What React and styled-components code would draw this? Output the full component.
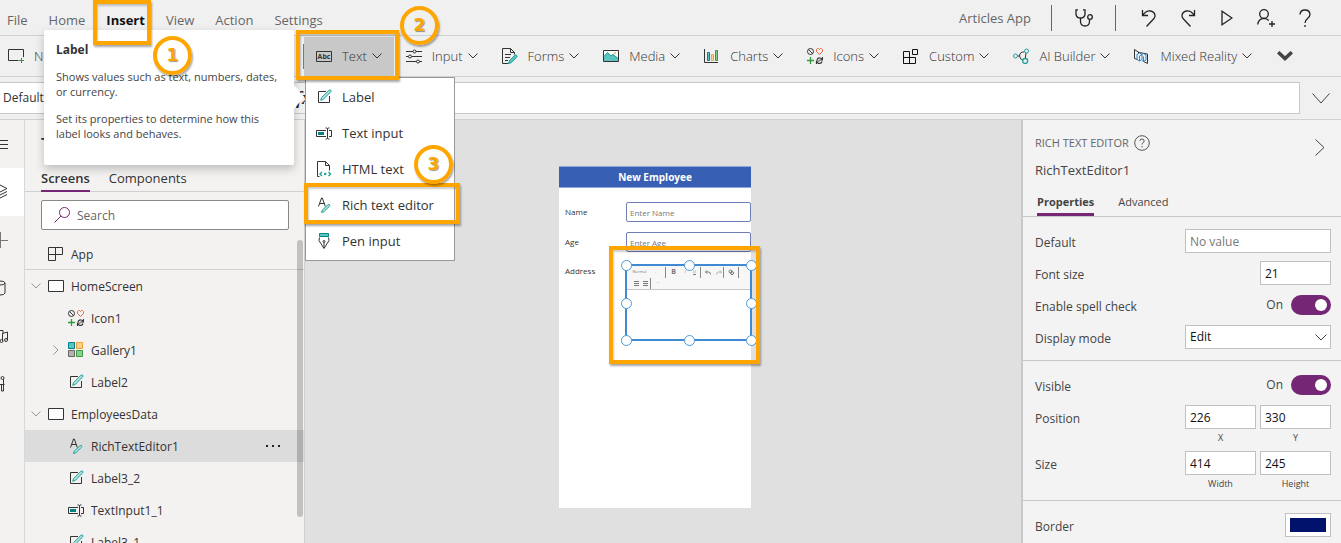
import React, { useState } from 'react';
import styled, { createGlobalStyle } from 'styled-components';

// STYLES
const GlobalStyle = createGlobalStyle`
    * {
        box-sizing: border-box;
    }
    body {
        margin: 0;
        font-family: 'Open Sans', 'Noto Sans', sans-serif;
        font-size: 12px;
        line-height: 16px;
        color: #333;
    }
    button, input, select {
        font: inherit;
        color: inherit;
        margin: 0;
        padding: 0;
    }
    button {
        border: none;
        background: none;
    }
    svg {
        display: block;
        flex: none;
    }
`
const Shell = styled.div`
    position: relative;
    height: 100vh;
    display: flex;
    flex-direction: column;
    overflow: hidden;
    background: #f0f0f0;
`
const TopBar = styled.header`
    display: flex;
    justify-content: space-between;
    align-items: center;
    height: 36px;
    flex: none;
    padding: 0 17px 0 7px;
    border-bottom: 1px solid #d0d0d0;
`
const MenuTabs = styled.nav`
    display: flex;
    gap: 21px;
    padding-top: 4px;
`
const MenuTab = styled.button`
    font-size: 13px;
    font-weight: ${props => props.$active ? 700 : 400};
    color: ${props => props.$active ? '#111' : '#666'};
`
const AppTools = styled.div`
    display: flex;
    align-items: center;
`
const AppName = styled.span`
    font-size: 13px;
    color: #666;
    padding-right: 20px;
`
const ToolDivider = styled.span`
    width: 1px;
    height: 26px;
    background: #666;
`
const ToolButton = styled.button`
    display: flex;
    justify-content: center;
    align-items: center;
    width: ${props => props.$wide ? 63 : 39}px;
    height: 32px;
    color: #222;
`
const ToolGroup = styled.div`
    display: flex;
    padding-left: 13px;
`
const Ribbon = styled.div`
    display: flex;
    align-items: center;
    height: 41px;
    flex: none;
    border-bottom: 1px solid #d0d0d0;
`
const NewGroup = styled.div`
    width: 304px;
    flex: none;
    height: 25px;
    border-right: 1px solid #777;
    display: flex;
    align-items: center;
`
const RibbonButton = styled.button`
    display: flex;
    align-items: center;
    height: 39px;
    padding: 0 12px 0 ${props => props.$first ? 8 : 12}px;
    font-size: 13px;
    font-weight: 300;
    color: #333;
    white-space: nowrap;
    background: ${props => props.$open ? '#c8c8c8' : 'transparent'};

    span {
        padding: 0 5px 0 10px;
    }
`
const MoreButton = styled.button`
    padding: 0 13px;
    color: #444;
`
const FormulaBar = styled.div`
    display: flex;
    align-items: center;
    height: 43px;
    flex: none;
    border-bottom: 1px solid #d0d0d0;
`
const PropertySelect = styled.select`
    appearance: none;
    width: 270px;
    height: 32px;
    padding: 0 3px;
    border: 1px solid #c8c8c8;
    border-left: none;
    border-radius: 0;
    background: #fff;
    font-size: 12px;
`
const FxLabel = styled.span`
    width: 40px;
    height: 32px;
    padding: 5px 0 0 26px;
    border: solid #c8c8c8;
    border-width: 1px 0;
    font: italic bold 18px 'Liberation Serif', serif;
    color: #222;
`
const FormulaInput = styled.input`
    flex: 1;
    min-width: 0;
    height: 32px;
    border: 1px solid #c8c8c8;
    background: #fff;
`
const ExpandButton = styled.button`
    display: flex;
    justify-content: center;
    width: 41px;
    color: #444;
`
const Workspace = styled.div`
    flex: 1;
    min-height: 0;
    display: flex;
`
const Rail = styled.nav`
    display: flex;
    flex-direction: column;
    align-items: flex-end;
    width: 25px;
    flex: none;
    overflow: hidden;
    background: #f3f2f1;
    border-right: 1px solid #d8d8d8;
`
const RailButton = styled.button`
    display: flex;
    align-items: center;
    justify-content: center;
    width: 48px;
    height: 48px;
    flex: none;
    color: #333;
    border-radius: 2px;
    background: ${props => props.$active ? '#fff' : 'transparent'};
`
const TreePanel = styled.aside`
    position: relative;
    width: 280px;
    flex: none;
    overflow: hidden;
    background: #f3f2f1;
    border-right: 1px solid #d0d0d0;
`
const TreeTitle = styled.h2`
    margin: 0;
    padding: 12px 16px 8px;
    font-size: 16px;
    line-height: 24px;
    font-weight: 600;
`
const TreeTabs = styled.div`
    display: flex;
    gap: 19px;
    height: 28px;
    padding: 0 16px;
    border-bottom: 1px solid #d0d0d0;
`
const TreeTab = styled.button`
    height: 28px;
    padding-top: 1px;
    font-size: 13px;
    font-weight: ${props => props.$active ? 600 : 400};
    border-bottom: 2px solid ${props => props.$active ? '#742774' : 'transparent'};
`
const SearchBox = styled.label`
    display: flex;
    align-items: center;
    gap: 7px;
    height: 30px;
    margin: 8px 15px 8px 16px;
    padding-left: 12px;
    border: 1px solid #888;
    border-radius: 2px;
    background: #fff;
    color: #742774;

    input {
        flex: 1;
        min-width: 0;
        padding-top: 2px;
        border: none;
        outline: none;
        background: none;
        color: #333;
    }
    input::placeholder {
        color: #666;
    }
`
const TreeList = styled.ul`
    margin: 0;
    padding: 0;
    list-style: none;
`
const TreeRow = styled.li`
    display: flex;
    align-items: center;
    height: 32px;
    padding-left: ${props => props.$depth ? 23 : 3}px;
    padding-right: 23px;
    background: ${props => props.$selected ? '#dcdcdc' : 'transparent'};
    border-bottom: ${props => props.$ruled ? '1px solid #d0d0d0' : 'none'};

    > span {
        flex: 1;
        padding: 2px 0 0 7px;
    }
`
const Twisty = styled.button`
    display: flex;
    justify-content: center;
    width: 16px;
    margin-right: 4px;
    color: #999;
`
const ScrollThumb = styled.div`
    position: absolute;
    top: 120px;
    right: 1px;
    width: 6px;
    height: 277px;
    border-radius: 3px;
    background: rgba(0, 0, 0, 0.2);
`
const Canvas = styled.main`
    flex: 1;
    min-width: 0;
    display: flex;
    justify-content: center;
    align-items: flex-start;
    padding: 46px 16px 0 0;
    background: #e0e0e0;
`
const PhoneScreen = styled.section`
    width: 192px;
    min-height: 342px;
    flex: none;
    background: #fff;
    font-size: 8px;
    line-height: 12px;
`
const ScreenTitle = styled.h1`
    margin: 0 0 14px;
    border: solid #8ea7d6;
    border-width: 1px 0;
    background: #375fb3;
    color: #fff;
    font-size: 10px;
    line-height: 20px;
    text-align: center;
`
const FormRow = styled.div`
    display: flex;
    align-items: center;
    margin-bottom: 10px;

    label {
        width: 67px;
        padding-left: 6px;
        flex: none;
    }
    input {
        flex: 1;
        min-width: 0;
        height: 20px;
        padding: 0 3px;
        border: 1px solid #6f7db8;
        border-radius: 2px;
        background: #fff;
    }
    input::placeholder {
        color: #777;
    }
`
const EditorRow = styled.div`
    display: flex;
    padding-top: 3px;

    > span {
        width: 67px;
        padding-left: 6px;
        flex: none;
    }
`
const EditorFrame = styled.div`
    position: relative;
    flex: 1;
    height: 75px;
    outline: 2px solid #3f8ad2;
    outline-offset: -1px;
    background: #fff;
`
const EditorTools = styled.div`
    display: flex;
    flex-wrap: wrap;
    align-items: center;
    align-content: center;
    height: 25px;
    padding: 1px 6px 0;
    border-bottom: 1px solid #c8c8c8;
    background: #f7f7f7;
    color: #777;
    font-size: 4px;
    line-height: 8px;
`
const EditorTool = styled.span`
    width: ${props => props.$width}px;
    height: 11px;
    display: flex;
    align-items: center;
    justify-content: center;
    font-size: ${props => props.$strong ? 7 : 4}px;
    font-weight: ${props => props.$strong ? 700 : 400};
    border-right: ${props => props.$last ? '1px solid #888' : 'none'};
`
const Handle = styled.i`
    position: absolute;
    left: ${props => props.$left};
    top: ${props => props.$top};
    width: 11px;
    height: 11px;
    margin: -5px 0 0 -5px;
    border: 1px solid #4a9bd8;
    border-radius: 50%;
    background: #fff;
`
const PropsPanel = styled.aside`
    width: 320px;
    flex: none;
    border-left: 2px solid #c8c8c8;
    background: #f3f3f3;
    color: #444;
`
const PropsHeader = styled.div`
    display: flex;
    justify-content: space-between;
    padding: 15px 16px 0 12px;
`
const ControlType = styled.div`
    display: flex;
    align-items: center;
    gap: 5px;
    font-size: 11px;
    color: #666;
`
const ControlName = styled.div`
    padding-top: 10px;
    font-size: 13px;
    line-height: 18px;
`
const CollapseButton = styled.button`
    padding-top: 4px;
    color: #444;
    align-self: flex-start;
`
const PropsTabs = styled.div`
    display: flex;
    gap: 24px;
    margin-top: 10px;
    padding: 0 14px;
    border-bottom: 1px solid #c8c8c8;
`
const PropsTab = styled.button`
    height: 27px;
    padding-top: 1px;
    font-size: 11px;
    font-weight: ${props => props.$active ? 700 : 400};
    border-bottom: 3px solid ${props => props.$active ? '#742774' : 'transparent'};
`
const Section = styled.div`
    display: flex;
    flex-direction: column;
    gap: 8px;
    padding: 12px 10px 11px 12px;
    border-bottom: 1px solid #c8c8c8;
`
const Field = styled.div`
    display: flex;
    justify-content: space-between;
    align-items: flex-start;

    > label, > span {
        padding-top: 6px;
    }
`
const TextBox = styled.input`
    width: ${props => props.$short ? 71 : 146}px;
    height: 24px;
    padding: 0 4px;
    border: 1px solid #c0c0c0;
    background: #fff;
    color: #111;

    &::placeholder {
        color: #777;
        opacity: 1;
    }
`
const SelectWrap = styled.div`
    display: grid;
    width: 146px;
    align-items: center;
    justify-items: end;

    > * {
        grid-area: 1 / 1;
    }
    svg {
        margin-right: 4px;
        pointer-events: none;
        z-index: 1;
    }
`
const ModeSelect = styled.select`
    appearance: none;
    width: 100%;
    height: 24px;
    padding: 0 4px;
    border: 1px solid #c0c0c0;
    border-radius: 0;
    background: #fff;
    color: #111;
`
const Pair = styled.div`
    display: flex;
    gap: 4px;

    label {
        display: flex;
        flex-direction: column;
        align-items: center;
        font-size: 9px;
        line-height: 10px;
        gap: 4px;
    }
    input {
        font-size: 12px;
    }
`
const ToggleLabel = styled.label`
    && {
        display: flex;
        align-items: center;
        gap: 8px;
        padding: 2px 0;
    }
`
const Toggle = styled.input`
    appearance: none;
    width: 40px;
    height: 20px;
    border-radius: 10px;
    background: #742774;

    &::before {
        content: '';
        display: block;
        width: 12px;
        height: 12px;
        margin: 4px 0 0 24px;
        border-radius: 50%;
        background: #fff;
    }
    &:not(:checked)::before {
        margin-left: 4px;
    }
`
const Swatch = styled.button`
    width: 46px;
    height: 24px;
    padding: 4px;
    border: 1px solid #c0c0c0;
    background: #fff;

    i {
        display: block;
        height: 14px;
        background: #00126b;
    }
`
const Dropdown = styled.div`
    position: absolute;
    left: 305px;
    top: 77px;
    width: 150px;
    padding: 1px 0;
    border: 1px solid #999;
    background: #fff;
`
const DropdownItem = styled.button`
    display: flex;
    align-items: center;
    gap: 10px;
    width: 100%;
    height: 36px;
    padding-left: 10px;
    font-size: 13px;
    white-space: nowrap;
`
const Tooltip = styled.div`
    position: absolute;
    left: 44px;
    top: 30px;
    width: 250px;
    height: 135px;
    padding: 12px 8px 0 12px;
    border-radius: 2px;
    background: #fff;
    box-shadow: 0 4px 10px rgba(0, 0, 0, 0.22);
    color: #444;
    font-size: 11px;
    line-height: 15px;

    &::after {
        content: '';
        position: absolute;
        left: 100%;
        top: 55px;
        border: solid transparent;
        border-width: 12px 0 12px 10px;
        border-left-color: #fff;
    }
    strong {
        font-size: 12px;
        color: #333;
    }
    p {
        margin: 12px 0 0;
    }
`
const Highlight = styled.div`
    position: absolute;
    left: ${props => props.$x}px;
    top: ${props => props.$y}px;
    width: ${props => props.$w}px;
    height: ${props => props.$h}px;
    border: 4px solid #ffa500;
    box-shadow: 1px 2px 2px rgba(0, 0, 0, 0.35), inset 1px 2px 2px rgba(0, 0, 0, 0.2);
    pointer-events: none;
`
const StepBadge = styled.div`
    position: absolute;
    left: ${props => props.$x}px;
    top: ${props => props.$y}px;
    width: 39px;
    height: 39px;
    border: 4px solid #ffa500;
    border-radius: 50%;
    box-shadow: 1px 2px 2px rgba(0, 0, 0, 0.35);
    color: #ffa500;
    font: bold 17px/31px 'DejaVu Sans', sans-serif;
    text-align: center;
    text-shadow: 1px 1px 1px rgba(0, 0, 0, 0.4);
    pointer-events: none;
`

// ICONS
const Svg = ({ w = 16, h = 16, children, ...rest }) => (
    <svg width={w} height={h} viewBox={`0 0 ${w} ${h}`} fill="none" stroke="currentColor" aria-hidden="true" {...rest}>
        {children}
    </svg>
)

const ChevronDown = ({ w = 10, h = 6, stroke = 1 }) => (
    <Svg w={w} h={h} strokeWidth={stroke}>
        <path d={`M.5 .5 L${w / 2} ${h - 1} L${w - 0.5} .5`} />
    </Svg>
)
const ChevronRight = ({ w = 6, h = 10 }) => (
    <Svg w={w} h={h}>
        <path d={`M.5 .5 L${w - 1} ${h / 2} L.5 ${h - 0.5}`} />
    </Svg>
)
const MoreIcon = () => (
    <Svg w={16} h={10} strokeWidth="3.500">
        <path d="M1.200 1.200L8 7.500l6.800-6.300" />
    </Svg>
)

const LabelIcon = () => (
    <Svg>
        <path d="M10 2.500H2.500v11h11V7" stroke="#333" />
        <path d="M4.700 11.300l.8-2.700 7.600-7.400q1-.7 1.600 0 .7.9 0 1.600L7.300 10.400z" fill="#b5e3e1" stroke="#209f9a" />
    </Svg>
)
const TextInputIcon = () => (
    <Svg>
        <path d="M10 5.500H.5v6H10M13 5.500h2.500v6H13" stroke="#333" />
        <path d="M9.500 3h1.500l.5.5.5-.5H13.500M9.500 14h1.500l.5-.5.5.5H13.500M11.500 3.500v10" stroke="#333" />
        <path d="M2 8.500h6" stroke="#038387" strokeWidth="3" />
    </Svg>
)
const HtmlIcon = () => (
    <Svg>
        <path d="M3.500 15.500h-2V.5h8l4 4v5M9.500 .5v4h4" stroke="#333" />
        <path d="M6 11l-2 2 2 2M12.500 11l2 2-2 2" stroke="#209f9a" strokeWidth="1.400" />
        <circle cx="9.200" cy="13" r="1.300" fill="#209f9a" stroke="none" />
    </Svg>
)
const RichTextIcon = () => (
    <Svg>
        <path d="M2.500 9.500L5.500 1h.8l3 8.500M3.500 6.500h5" stroke="#333" />
        <path d="M5.500 15.500l.8-2.400 5.700-5.400q1-.6 1.500 0 .6.7 0 1.500L7.900 14.700z" fill="#b5e3e1" stroke="#209f9a" />
    </Svg>
)
const PenIcon = () => (
    <Svg>
        <path d="M3.500 .5h9v3h-9z" fill="#5cc4c1" stroke="#038387" />
        <path d="M3.500 4.500L3 7.500l5 8 5-8-.5-3M8 15V9.500" stroke="#333" />
        <circle cx="8" cy="8.500" r="1" stroke="#333" />
    </Svg>
)
const NewScreenIcon = () => (
    <Svg>
        <path d="M10.500 12.500H.5v-11h15V9" stroke="#333" />
        <path d="M13.500 10v5M11 12.500h5" stroke="#2f9a3c" />
    </Svg>
)
const AbcIcon = () => (
    <Svg>
        <path d="M.5 3.500h15v10H.5z" stroke="#333" />
        <text x="8" y="11" fontSize="7" fontWeight="700" textAnchor="middle" fill="#333" stroke="none">Abc</text>
    </Svg>
)
const SlidersIcon = () => (
    <Svg stroke="#333">
        <path d="M0 3.500h7M10 3.500h6M0 8.500h2.500M5.500 8.500H16M0 13.500h10.500M13.500 13.500H16" />
        <circle cx="8.500" cy="3.500" r="1.500" />
        <circle cx="4" cy="8.500" r="1.500" />
        <circle cx="12" cy="13.500" r="1.500" />
    </Svg>
)
const FormsIcon = () => (
    <Svg>
        <path d="M6.500 15.500H.5V.5h8l4 4v2M8.500 .5v4h4M3 6.500h6M3 9.500h5M3 12.500h3" stroke="#333" />
        <path d="M6.500 15.500l1-3 5.500-5.300q1.400-.5 2 .5.300.8-.3 1.500L9.200 14.700z" fill="#5cc4c1" stroke="#209f9a" />
    </Svg>
)
const MediaIcon = () => (
    <Svg>
        <path d="M1 2.500h14v11H1z" fill="#fff" stroke="none" />
        <path d="M1 13V8l3.500-3.500L8 8l2-2 5 4v3z" fill="#5cc4c1" stroke="none" />
        <path d="M1 8.500l3.500-4L8 8l2-1.500 5 4" stroke="#209f9a" />
        <path d="M.5 2.500h15v11H.5z" stroke="#333" />
        <circle cx="12" cy="5" r="1" fill="#f4b04e" stroke="none" />
    </Svg>
)
const ChartsIcon = () => (
    <Svg>
        <path d="M.5 1v13.500H14" stroke="#333" />
        <path d="M3.500 4.500h2v8h-2z" stroke="#038387" fill="#5cc4c1" />
        <path d="M7.500 6.500h2v6h-2z" stroke="#f2a33a" fill="#fbd08c" />
        <path d="M11.500 2.500h2v10h-2z" stroke="#2f9a3c" fill="#8ccf8f" />
    </Svg>
)
const IconsIcon = () => (
    <Svg>
        <circle cx="3.500" cy="3.500" r="3" stroke="#333" />
        <path d="M1.500 1.500l4 4" stroke="#333" />
        <path d="M12.500 6.500L9.500 3.500V1.500l1-1h1l1 1 1-1h1l1 1v2z" stroke="#f0603c" />
        <path d="M3.500 9v7M0 12.500h7" stroke="#2f9a3c" strokeWidth="1.300" />
        <path d="M10 12q.5-2.500 3-2 1.500.2 2 1.500M15.500 9v3h-3M15 13.500q-.5 2-3 2-1.300-.3-2-1.500M9.500 16v-3h3" stroke="#333" strokeWidth="1.200" />
    </Svg>
)
const CustomIcon = () => (
    <Svg stroke="#111">
        <path d="M.5 3.500h6v12h-6zM.5 9.500h12v6h-12M9.500 1.500h5v5h-5z" />
    </Svg>
)
const AiIcon = () => (
    <Svg>
        <path d="M11.200 4Q7 3.500 6.500 8q.5 3.500 3.500 4.200M13 5l-.8 5.500M4.500 8h2" stroke="#333" />
        <circle cx="2.500" cy="8" r="2" stroke="#209f9a" />
        <circle cx="13.500" cy="3" r="2" stroke="#209f9a" />
        <circle cx="12.200" cy="13" r="2.500" stroke="#209f9a" strokeWidth="1.300" />
    </Svg>
)
const MixedIcon = () => (
    <Svg>
        <path d="M.5 10.500V1.500l4.500 3 8.500 1.500v9.500l-4-2M.5 10.500l3 1M4.500 4v2" stroke="#333" />
        <path d="M3 6.500L5.500 5 8 6.500v5L5.500 13 3 11.500zM5.500 8L8 6.500M5.500 8v5M7 7l2.500-1.500L12 7v5l-2.500 1.500L8 12.500M9.500 8.500v5" stroke="#2f86cc" />
    </Svg>
)
const AppIcon = () => (
    <Svg stroke="#333">
        <path d="M.5 1.500h14v7H.5zM.5 8.500v6h7v-13" />
    </Svg>
)
const ScreenIcon = () => (
    <Svg stroke="#333">
        <path d="M.5 2.500h15v11H.5z" fill="#fff" />
    </Svg>
)
const GalleryIcon = () => (
    <Svg>
        <path d="M.5 .5h6v6h-6z" fill="#5cc4c1" stroke="#038387" />
        <path d="M8.500 .5h6v6h-6z" fill="#fbd08c" stroke="#f2a33a" />
        <path d="M.5 8.500h6v6h-6z" fill="#b3b3b3" stroke="#666" />
        <path d="M8.500 8.500h6v6h-6z" fill="#8ccf8f" stroke="#3c9c43" />
    </Svg>
)
const SearchIcon = () => (
    <Svg>
        <circle cx="10.500" cy="5.500" r="5" />
        <path d="M7 9L.5 15.500" />
    </Svg>
)
const HelpIcon = () => (
    <Svg stroke="#555">
        <circle cx="8" cy="8" r="7.300" />
        <path d="M5.800 6q.2-2 2.200-2t2.200 2q0 1-1.200 1.800T8 9.500M8 11v1.300" />
    </Svg>
)

// top right tools
const CheckerIcon = () => (
    <Svg w={18} h={18} strokeWidth="1.300">
        <path d="M3 .8H1v4.500q.5 3.700 4.500 3.700T10 5.300V.8H8M5.500 9v4q.5 4 4.500 4t4.500-4v-2.500" />
        <circle cx="15" cy="8" r="2.300" />
    </Svg>
)
const UndoIcon = () => (
    <Svg w={16} h={18} strokeWidth="1.300">
        <path d="M1.500 1v5.500H7M1.500 6.500Q5 1.500 9.500 2q4.500 1 4.500 5 0 1.500-1.500 3L5.500 17.500" />
    </Svg>
)
const RedoIcon = () => (
    <Svg w={16} h={18} strokeWidth="1.300">
        <path d="M14.500 1v5.500H9M14.500 6.500Q11 1.500 6.500 2 2 3 2 7q0 1.500 1.500 3l7 7.500" />
    </Svg>
)
const PlayIcon = () => (
    <Svg w={12} h={16} strokeWidth="1.300">
        <path d="M1 1.300v13.400L11 8z" />
    </Svg>
)
const ShareIcon = () => (
    <Svg w={18} h={18} strokeWidth="1.300">
        <circle cx="7" cy="5" r="4.300" />
        <path d="M.7 15.500Q1.500 9.500 7 9.300q3 .2 4.700 2.200M15 12v6M12 15h6" />
    </Svg>
)
const QuestionIcon = () => (
    <Svg w={12} h={18} strokeWidth="1.300">
        <path d="M1 5.500Q1.300 1 6 1t5 4.500q0 2-2.500 4T6 14M6 16v2" />
    </Svg>
)

// left rail
const railIcons = [
    ['Menu', <Svg key="i"><path d="M0 4.500h16M0 8.500h16M0 12.500h16" /></Svg>],
    ['Tree view', <Svg key="i"><path d="M1 4.500L8 1l7 3.500L8 8zM1 7.500L8 11l7-3.500M1 10.500L8 14l7-3.500M1 5v6" /></Svg>],
    ['Insert', <Svg key="i"><path d="M0 8.500h16M8.500 0v16" stroke="#777" /></Svg>],
    ['Data', <Svg key="i"><path d="M3 3v10q.5 2 5 2t5-2V3" /><ellipse cx="8" cy="3" rx="5" ry="2" /></Svg>],
    ['Media', <Svg key="i"><path d="M10.500 13V5.500L15.500 4v8M1 2.500h10v3M1 13h5" /><circle cx="9.500" cy="13" r="1.500" /><circle cx="14" cy="12" r="1.500" /></Svg>],
    ['Advanced tools', <Svg key="i"><path d="M7.500 1v14M4 8.500h8.500M9.500 8.500v6.500h2V3" /><circle cx="10.500" cy="2" r="1.500" /></Svg>],
]

// rich text toolbar
const EditorUndo = () => <Svg w={6} h={5}><path d="M.5 2h3q2 0 2 2.500M2 .5L.5 2 2 3.500" /></Svg>
const EditorRedo = () => <Svg w={6} h={5} opacity=".5"><path d="M5.500 2h-3q-2 0-2 2.500M4 .5L5.500 2 4 3.500" /></Svg>
const EditorLink = () => <Svg w={6} h={6}><circle cx="2.500" cy="2.500" r="1.500" /><circle cx="4" cy="4" r="1.500" /></Svg>
const EditorBullets = () => <Svg w={5} h={5}><path d="M0 .5h5M0 2.500h5M0 4.500h5" /></Svg>

// DATA
const menuTabs = ['File', 'Home', 'Insert', 'View', 'Action', 'Settings']

const ribbonItems = [
    ['Text', AbcIcon],
    ['Input', SlidersIcon],
    ['Forms', FormsIcon],
    ['Media', MediaIcon],
    ['Charts', ChartsIcon],
    ['Icons', IconsIcon],
    ['Custom', CustomIcon],
    ['AI Builder', AiIcon],
    ['Mixed Reality', MixedIcon],
]

const textControls = [
    ['Label', LabelIcon],
    ['Text input', TextInputIcon],
    ['HTML text', HtmlIcon],
    ['Rich text editor', RichTextIcon],
    ['Pen input', PenIcon],
]

const treeItems = [
    { name: 'App', icon: AppIcon, depth: 0, ruled: true },
    { name: 'HomeScreen', icon: ScreenIcon, depth: 0, open: true },
    { name: 'Icon1', icon: IconsIcon, depth: 1 },
    { name: 'Gallery1', icon: GalleryIcon, depth: 1, closed: true },
    { name: 'Label2', icon: LabelIcon, depth: 1 },
    { name: 'EmployeesData', icon: ScreenIcon, depth: 0, open: true },
    { name: 'RichTextEditor1', icon: RichTextIcon, depth: 1 },
    { name: 'Label3_2', icon: LabelIcon, depth: 1 },
    { name: 'TextInput1_1', icon: TextInputIcon, depth: 1 },
    { name: 'Label3_1', icon: LabelIcon, depth: 1 },
]

const editorTools = [
    { id: 'style', width: 15, content: 'Normal' },
    { id: 'open', width: 19, last: true, content: '-' },
    { id: 'bold', width: 15, strong: true, content: 'B' },
    { id: 'italic', width: 8, content: <em>I</em> },
    { id: 'underline', width: 12, last: true, content: <u>U</u> },
    { id: 'undo', width: 14, content: <EditorUndo /> },
    { id: 'redo', width: 9, last: true, content: <EditorRedo /> },
    { id: 'link', width: 15, last: true, content: <EditorLink /> },
    { id: 'bullets', width: 8, content: <EditorBullets /> },
    { id: 'numbers', width: 11, last: true, content: <EditorBullets /> },
    { id: 'more', width: 14, content: '···' },
]

const handles = [
    ['0%', '0%'], ['50%', '0%'], ['100%', '0%'],
    ['0%', '50%'], ['100%', '50%'],
    ['0%', '100%'], ['50%', '100%'], ['100%', '100%'],
]

const ToggleField = ({ id, label }) => {
    const [on, setOn] = useState(true)
    return (
        <Field>
            <label htmlFor={id}>{label}</label>
            <ToggleLabel>
                {on ? 'On' : 'Off'}
                <Toggle id={id} type="checkbox" checked={on} onChange={() => setOn(!on)} />
            </ToggleLabel>
        </Field>
    )
}

const App = () => {
    const selected = 'RichTextEditor1'

    return (
        <Shell>
            <GlobalStyle />

            <TopBar>
                <MenuTabs>
                    {menuTabs.map(tab => (
                        <MenuTab key={tab} $active={tab === 'Insert'}>{tab}</MenuTab>
                    ))}
                </MenuTabs>
                <AppTools>
                    <AppName>Articles App</AppName>
                    <ToolDivider />
                    <ToolButton $wide aria-label="App checker"><CheckerIcon /></ToolButton>
                    <ToolDivider />
                    <ToolGroup>
                        <ToolButton aria-label="Undo"><UndoIcon /></ToolButton>
                        <ToolButton aria-label="Redo"><RedoIcon /></ToolButton>
                        <ToolButton aria-label="Preview"><PlayIcon /></ToolButton>
                        <ToolButton aria-label="Share"><ShareIcon /></ToolButton>
                        <ToolButton aria-label="Help"><QuestionIcon /></ToolButton>
                    </ToolGroup>
                </AppTools>
            </TopBar>

            <Ribbon>
                <NewGroup>
                    <RibbonButton $first>
                        <NewScreenIcon />
                        <span>New screen</span>
                    </RibbonButton>
                </NewGroup>
                {ribbonItems.map(([name, Icon]) => (
                    <RibbonButton key={name} $open={name === 'Text'}>
                        <Icon />
                        <span>{name}</span>
                        <ChevronDown />
                    </RibbonButton>
                ))}
                <MoreButton aria-label="More commands"><MoreIcon /></MoreButton>
            </Ribbon>

            <FormulaBar>
                <PropertySelect aria-label="Property" defaultValue="Default">
                    <option>Default</option>
                </PropertySelect>
                <FxLabel>fx</FxLabel>
                <FormulaInput aria-label="Formula" />
                <ExpandButton aria-label="Expand formula bar"><ChevronDown w={18} h={11} /></ExpandButton>
            </FormulaBar>

            <Workspace>
                <Rail>
                    {railIcons.map(([name, icon]) => (
                        <RailButton key={name} aria-label={name} $active={name === 'Tree view'}>{icon}</RailButton>
                    ))}
                </Rail>

                <TreePanel>
                    <TreeTitle>Tree view</TreeTitle>
                    <TreeTabs>
                        <TreeTab $active>Screens</TreeTab>
                        <TreeTab>Components</TreeTab>
                    </TreeTabs>
                    <SearchBox>
                        <SearchIcon />
                        <input type="text" placeholder="Search" aria-label="Search" />
                    </SearchBox>
                    <TreeList>
                        {treeItems.map(({ name, icon: Icon, depth, ruled, open, closed }) => (
                            <TreeRow key={name} $depth={depth} $ruled={ruled} $selected={name === selected}>
                                <Twisty aria-label={`Toggle ${name}`}>
                                    {open && <ChevronDown />}
                                    {closed && <ChevronRight />}
                                </Twisty>
                                <Icon />
                                <span>{name}</span>
                                {name === selected && (
                                    <Svg w={16} h={4} fill="#222" stroke="none">
                                        <path d="M1 1h2v2h-2zM7 1h2v2h-2zM13 1h2v2h-2z" />
                                    </Svg>
                                )}
                            </TreeRow>
                        ))}
                    </TreeList>
                    <ScrollThumb />
                </TreePanel>

                <Canvas>
                    <PhoneScreen>
                        <ScreenTitle>New Employee</ScreenTitle>
                        <FormRow>
                            <label htmlFor="emp-name">Name</label>
                            <input id="emp-name" placeholder="Enter Name" />
                        </FormRow>
                        <FormRow>
                            <label htmlFor="emp-age">Age</label>
                            <input id="emp-age" placeholder="Enter Age" />
                        </FormRow>
                        <EditorRow>
                            <span>Address</span>
                            <EditorFrame>
                                <EditorTools>
                                    {editorTools.map(({ id, width, last, strong, content }) => (
                                        <EditorTool key={id} $width={width} $last={last} $strong={strong}>{content}</EditorTool>
                                    ))}
                                </EditorTools>
                                {handles.map(([left, top]) => (
                                    <Handle key={left + top} $left={left} $top={top} />
                                ))}
                            </EditorFrame>
                        </EditorRow>
                    </PhoneScreen>
                </Canvas>

                <PropsPanel>
                    <PropsHeader>
                        <div>
                            <ControlType>RICH TEXT EDITOR <HelpIcon /></ControlType>
                            <ControlName>{selected}</ControlName>
                        </div>
                        <CollapseButton aria-label="Collapse panel"><ChevronRight w={10} h={17} /></CollapseButton>
                    </PropsHeader>
                    <PropsTabs>
                        <PropsTab $active>Properties</PropsTab>
                        <PropsTab>Advanced</PropsTab>
                    </PropsTabs>

                    <Section>
                        <Field>
                            <label htmlFor="default">Default</label>
                            <TextBox id="default" placeholder="No value" />
                        </Field>
                        <Field>
                            <label htmlFor="font-size">Font size</label>
                            <TextBox id="font-size" $short defaultValue="21" />
                        </Field>
                        <ToggleField id="spell-check" label="Enable spell check" />
                        <Field>
                            <label htmlFor="display-mode">Display mode</label>
                            <SelectWrap>
                                <ModeSelect id="display-mode" defaultValue="Edit">
                                    <option>Edit</option>
                                    <option>View</option>
                                    <option>Disabled</option>
                                </ModeSelect>
                                <ChevronDown w={12} h={7} />
                            </SelectWrap>
                        </Field>
                    </Section>

                    <Section>
                        <ToggleField id="visible" label="Visible" />
                        <Field>
                            <span>Position</span>
                            <Pair>
                                <label><TextBox $short defaultValue="226" />X</label>
                                <label><TextBox $short defaultValue="330" />Y</label>
                            </Pair>
                        </Field>
                        <Field>
                            <span>Size</span>
                            <Pair>
                                <label><TextBox $short defaultValue="414" />Width</label>
                                <label><TextBox $short defaultValue="245" />Height</label>
                            </Pair>
                        </Field>
                    </Section>

                    <Section>
                        <Field>
                            <span>Border</span>
                            <Swatch aria-label="Border color"><i /></Swatch>
                        </Field>
                    </Section>
                </PropsPanel>
            </Workspace>

            <Dropdown>
                {textControls.map(([name, Icon]) => (
                    <DropdownItem key={name}><Icon />{name}</DropdownItem>
                ))}
            </Dropdown>

            <Tooltip role="tooltip">
                <strong>Label</strong>
                <p>Shows values such as text, numbers, dates, or currency.</p>
                <p>Set its properties to determine how this label looks and behaves.</p>
            </Tooltip>

            <Highlight $x={93} $y={0} $w={58} $h={45} />
            <Highlight $x={296} $y={30} $w={103} $h={50} />
            <Highlight $x={304} $y={183} $w={156} $h={41} />
            <Highlight $x={609} $y={246} $w={151} $h={118} />
            <StepBadge $x={153} $y={36}>1</StepBadge>
            <StepBadge $x={400} $y={6}>2</StepBadge>
            <StepBadge $x={414} $y={145}>3</StepBadge>
        </Shell>
    );
}

export default App;
